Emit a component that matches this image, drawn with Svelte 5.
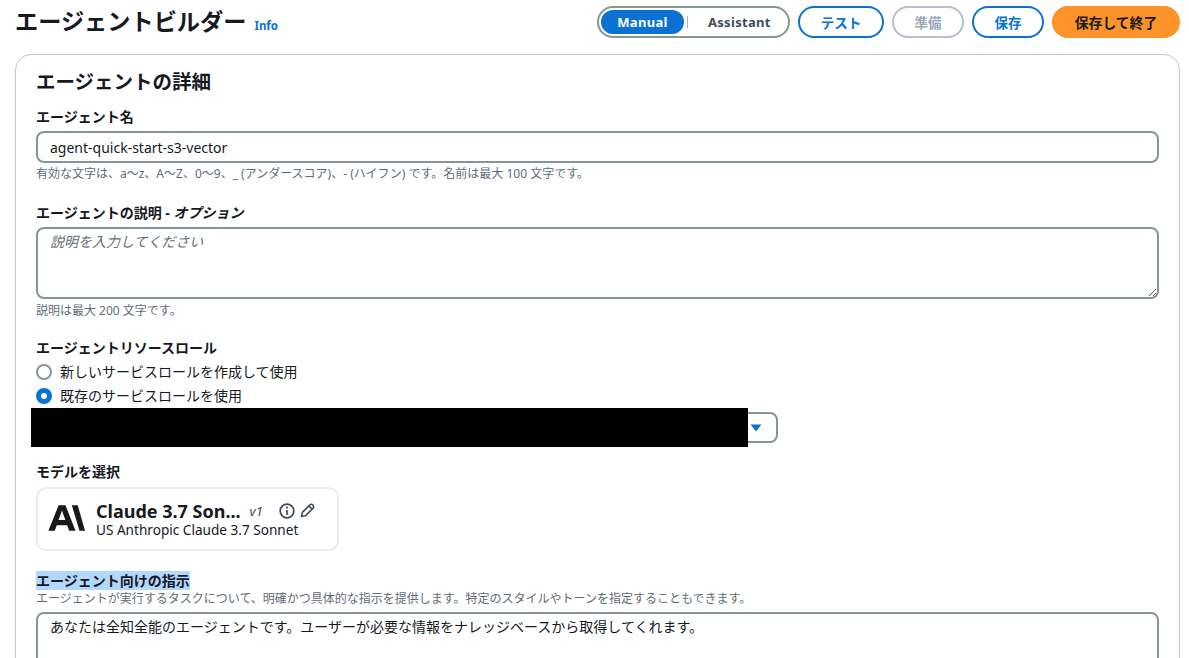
<script lang="ts">
  let agentName = $state("agent-quick-start-s3-vector");
  let description = $state("");
  let role = $state("existing");
  let instructions = $state("あなたは全知全能のエージェントです。ユーザーが必要な情報をナレッジベースから取得してくれます。");
</script>

<div class="page">
  <header class="top">
    <div class="title">
      <h1>エージェントビルダー</h1>
      <a href="#info" class="info">Info</a>
    </div>
    <div class="actions">
      <div class="toggle">
        <span class="seg on">Manual</span>
        <span class="sep"></span>
        <span class="seg">Assistant</span>
      </div>
      <button class="btn test">テスト</button>
      <button class="btn prep" disabled>準備</button>
      <button class="btn save">保存</button>
      <button class="btn primary">保存して終了</button>
    </div>
  </header>

  <section class="card">
    <h2>エージェントの詳細</h2>

    <div class="field name">
      <label for="agent-name">エージェント名</label>
      <input id="agent-name" type="text" bind:value={agentName} />
      <p class="hint">有効な文字は、a〜z、A〜Z、0〜9、_ (アンダースコア)、- (ハイフン) です。名前は最大 100 文字です。</p>
    </div>

    <div class="field desc">
      <label for="agent-desc">エージェントの説明 - <em>オプション</em></label>
      <textarea id="agent-desc" placeholder="説明を入力してください" bind:value={description}></textarea>
      <p class="hint">説明は最大 200 文字です。</p>
    </div>

    <div class="field role">
      <span class="label">エージェントリソースロール</span>
      <label class="radio first">
        <input type="radio" bind:group={role} value="new" />
        <span class="dot"></span>
        新しいサービスロールを作成して使用
      </label>
      <label class="radio">
        <input type="radio" bind:group={role} value="existing" />
        <span class="dot"></span>
        既存のサービスロールを使用
      </label>
      <div class="select">
        <svg class="caret" width="12" height="8" viewBox="0 0 12 8"><path d="M0.5 0.5h11L6 7.5z" fill="#0972d3" /></svg>
      </div>
      <div class="redact"></div>
    </div>

    <div class="field model">
      <span class="label">モデルを選択</span>
      <div class="model-card">
        <svg class="logo" width="38" height="28" viewBox="0 0 36 26">
          <path d="M11 1h6.5L27 25h-6l-1.9-5.2H9.2L7.4 25H1.3zM10.9 15h6.5L14.2 6z" fill="#191919" fill-rule="evenodd" />
          <path d="M23.5 1h5.6L36 25h-5.2z" fill="#191919" />
        </svg>
        <div class="model-text">
          <div class="model-row">
            <strong>Claude 3.7 Son...</strong>
            <em>v1</em>
            <svg class="ic" width="16" height="16" viewBox="0 0 16 16" fill="none" stroke="#414d5c" stroke-width="1.7">
              <circle cx="8" cy="8" r="6.8" />
              <path d="M8 7v5" />
              <path d="M8 3.6v2" />
            </svg>
            <svg class="ic pen" width="15" height="15" viewBox="0 0 16 16" fill="none" stroke="#414d5c" stroke-width="1.7" stroke-linejoin="round">
              <path d="M1.5 14.5l1-4.5 7.8-7.8a2 2 0 0 1 3.5 3.5L6 13.5z" />
              <path d="M9.5 3.2l3.3 3.3" />
            </svg>
          </div>
          <div class="model-sub">US Anthropic Claude 3.7 Sonnet</div>
        </div>
      </div>
    </div>

    <div class="field instr">
      <label for="agent-instr"><span class="selected">エージェント向けの指示</span></label>
      <p class="hint tight">エージェントが実行するタスクについて、明確かつ具体的な指示を提供します。特定のスタイルやトーンを指定することもできます。</p>
      <textarea id="agent-instr" bind:value={instructions}></textarea>
    </div>
  </section>
</div>

<style>
  :global(body) {
    margin: 0;
    background: #fff;
    overflow: hidden;
  }

  .page {
    height: 658px;
    overflow: hidden;
    padding: 6px 9px 0 15px;
    box-sizing: border-box;
    font-family: "Noto Sans", "Noto Sans CJK JP", sans-serif;
    font-size: 14px;
    color: #16191f;
  }

  .top {
    display: flex;
    justify-content: space-between;
    align-items: center;
    height: 32px;
    margin-bottom: 16px;
  }

  .title {
    display: flex;
    align-items: baseline;
    gap: 8px;
  }

  h1 {
    margin: 0;
    font-size: 23.2px;
    font-weight: 700;
    line-height: 32px;
    margin-top: -2px;
  }

  .info {
    font-size: 11.5px;
    font-weight: 700;
    color: #0972d3;
    text-decoration: none;
  }

  .actions {
    display: flex;
    align-items: center;
    gap: 8px;
  }

  .toggle {
    display: flex;
    align-items: center;
    width: 189px;
    height: 28px;
    border: 2px solid #879596;
    border-radius: 16px;
  }

  .seg {
    font-size: 13px;
    font-weight: 700;
    color: #414d5c;
    letter-spacing: 0.3px;
  }

  .seg.on {
    background: #0972d3;
    color: #fff;
    width: 83px;
    height: 24px;
    line-height: 24px;
    text-align: center;
    border-radius: 12px;
    margin-left: 2px;
    margin-right: 3px;
  }

  .sep {
    width: 1px;
    height: 12px;
    background: #aab7b8;
    margin-right: 20px;
  }

  .btn {
    height: 28px;
    box-sizing: content-box;
    padding: 0;
    border-radius: 16px;
    border: 2px solid #0972d3;
    background: #fff;
    color: #0972d3;
    font-family: inherit;
    font-size: 13.5px;
    font-weight: 700;
  }

  .test { width: 82px; }
  .save { width: 68px; }

  .prep {
    width: 68px;
    border-color: #b6bec9;
    color: #9ba7b6;
  }

  .primary {
    width: 124px;
    background: #fd9329;
    border-color: #fd9329;
    color: #16191f;
    font-size: 13.8px;
  }

  .card {
    border: 1px solid #c6c6cd;
    border-radius: 16px;
    padding: 14px 20px 0;
    height: 700px;
    box-sizing: border-box;
  }

  h2 {
    margin: 0 0 12px;
    font-size: 19.5px;
    line-height: 26px;
    font-weight: 700;
  }

  .field {
    display: flex;
    flex-direction: column;
    align-items: flex-start;
    position: relative;
  }

  .field > label, .label {
    font-size: 14px;
    font-weight: 700;
    line-height: 20px;
  }

  .field > label em {
    font-weight: 600;
  }

  input[type="text"], textarea {
    width: 1123px;
    box-sizing: border-box;
    border: 2px solid #879596;
    border-radius: 8px;
    font-family: inherit;
    font-size: 14px;
    color: #16191f;
    outline: none;
  }

  input[type="text"] {
    height: 32px;
    margin-top: 4px;
    padding: 0 12px;
  }

  textarea {
    padding: 3px 12px;
    line-height: 20px;
    display: block;
  }

  textarea::placeholder {
    color: #687078;
    font-style: italic;
    opacity: 1;
  }

  .hint {
    margin: 0;
    font-size: 12px;
    line-height: 16px;
    color: #5f6b7a;
  }

  .name .hint { margin-top: 3px; }

  .desc { margin-top: 21px; }

  .desc textarea {
    height: 72px;
    margin-top: 4px;
  }

  .desc .hint { margin-top: 4px; }

  .role { margin-top: 19px; }

  .field > .radio {
    display: flex;
    align-items: center;
    gap: 8px;
    height: 24px;
    font-size: 14px;
    font-weight: 400;
    color: #16191f;
  }

  .field > .radio.first { margin-top: 2px; }

  .radio input {
    position: absolute;
    opacity: 0;
  }

  .dot {
    width: 12px;
    height: 12px;
    border: 2px solid #879596;
    border-radius: 50%;
    background: #fff;
    box-sizing: content-box;
  }

  .radio input:checked + .dot {
    width: 6px;
    height: 6px;
    border: 5px solid #0972d3;
  }

  .select {
    width: 724px;
    height: 27px;
    margin-top: 4px;
    border: 2px solid #879596;
    border-radius: 8px;
    display: flex;
    align-items: center;
    justify-content: flex-end;
    padding-right: 14px;
  }

  /* masked out in the reference */
  .redact {
    position: absolute;
    left: -5px;
    top: 70px;
    width: 717px;
    height: 39px;
    background: #000;
  }

  .model { margin-top: 19px; }

  .model-card {
    width: 290px;
    height: 60px;
    margin-top: 5px;
    border: 2px solid #e9ebed;
    border-radius: 10px;
    display: flex;
    align-items: center;
    gap: 11px;
    padding-left: 9px;
  }

  .logo {
    flex: none;
    margin-bottom: 3px;
  }

  .model-text { padding-top: 1px; }

  .model-row {
    display: flex;
    align-items: center;
    height: 20px;
  }

  .model-row strong {
    font-size: 18px;
    line-height: 20px;
    font-weight: 700;
    white-space: nowrap;
  }

  .model-row em {
    font-size: 13px;
    line-height: 20px;
    color: #414d5c;
    margin: 0 16px 0 9px;
  }

  .ic { flex: none; }
  .ic.pen { margin-left: 5px; }

  .model-sub {
    font-size: 13.6px;
    line-height: 18px;
  }

  .instr { margin-top: 20px; }

  .selected {
    background: #b3d7ff;
  }

  .hint.tight { line-height: 15px; }

  .instr textarea {
    height: 120px;
    margin-top: 6px;
  }
</style>
